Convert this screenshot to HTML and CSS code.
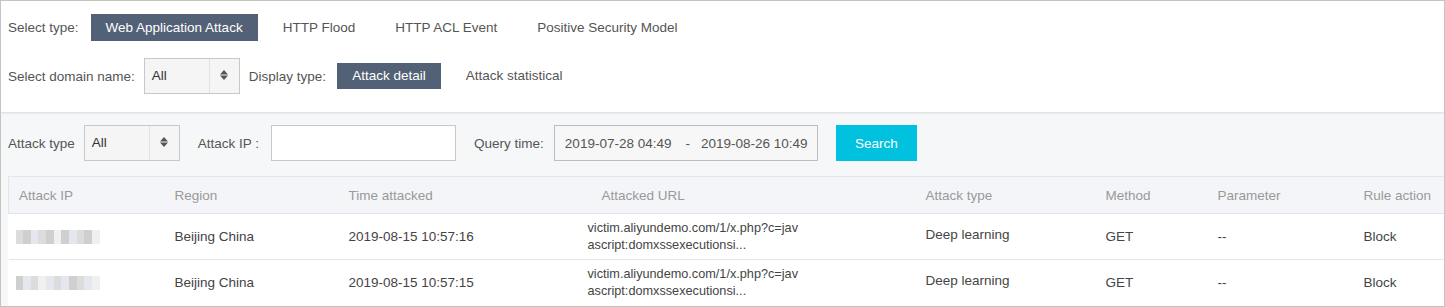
FILE: index.html
```html
<!DOCTYPE html>
<html>
<head>
<meta charset="utf-8">
<link rel="stylesheet" href="styles.css">
</head>
<body>
<div class="frame">
  <div class="top">
    <div class="row row1">
      <span class="label">Select type:</span>
      <div class="tabs">
        <span class="tab active">Web Application Attack</span>
        <span class="tab">HTTP Flood</span>
        <span class="tab">HTTP ACL Event</span>
        <span class="tab">Positive Security Model</span>
      </div>
    </div>
    <div class="row row2">
      <span class="label">Select domain name:</span>
      <div class="select sel-domain">
        <span class="sel-val">All</span>
        <span class="sel-arrow"><svg width="8" height="10" viewBox="0 0 8 10"><path d="M4 0L8 4.5H0Z M0 5.5H8L4 10Z" fill="#555"/></svg></span>
      </div>
      <span class="label lbl-display">Display type:</span>
      <div class="tabs small">
        <span class="tab active">Attack detail</span>
        <span class="tab">Attack statistical</span>
      </div>
    </div>
  </div>
  <div class="main">
    <div class="filters">
      <span class="label">Attack type</span>
      <div class="select sel-type">
        <span class="sel-val">All</span>
        <span class="sel-arrow"><svg width="8" height="10" viewBox="0 0 8 10"><path d="M4 0L8 4.5H0Z M0 5.5H8L4 10Z" fill="#555"/></svg></span>
      </div>
      <span class="label lbl-ip">Attack IP :</span>
      <div class="input"></div>
      <span class="label lbl-time">Query time:</span>
      <div class="daterange"><span>2019-07-28 04:49</span><span class="dash">-</span><span>2019-08-26 10:49</span></div>
      <button class="btn-search">Search</button>
    </div>
    <table class="grid">
      <colgroup>
        <col class="c1"><col class="c2"><col class="c3"><col class="c4"><col class="c5"><col class="c6"><col class="c7"><col class="c8">
      </colgroup>
      <thead>
        <tr>
          <th>Attack IP</th><th>Region</th><th>Time attacked</th><th class="th-url">Attacked URL</th><th>Attack type</th><th>Method</th><th>Parameter</th><th>Rule action</th>
        </tr>
      </thead>
      <tbody>
        <tr>
          <td class="td-ip"><div class="blur"><span class="b a"></span><span class="b c"></span><span class="b d"></span><span class="b a"></span><span class="b c"></span><span class="b e"></span><span class="b c"></span><span class="b d"></span><span class="b a"></span><span class="b c"></span><span class="b e"></span></div></td>
          <td>Beijing China</td>
          <td>2019-08-15 10:57:16</td>
          <td class="td-url">victim.aliyundemo.com/1/x.php?c=jav<br>ascript:domxssexecutionsi...</td>
          <td class="td-type">Deep learning</td>
          <td>GET</td>
          <td>--</td>
          <td>Block</td>
        </tr>
        <tr>
          <td class="td-ip"><div class="blur"><span class="b c"></span><span class="b d"></span><span class="b a"></span><span class="b e"></span><span class="b d"></span><span class="b a"></span><span class="b d"></span><span class="b c"></span><span class="b a"></span><span class="b d"></span><span class="b e"></span></div></td>
          <td>Beijing China</td>
          <td>2019-08-15 10:57:15</td>
          <td class="td-url">victim.aliyundemo.com/1/x.php?c=jav<br>ascript:domxssexecutionsi...</td>
          <td class="td-type">Deep learning</td>
          <td>GET</td>
          <td>--</td>
          <td>Block</td>
        </tr>
      </tbody>
    </table>
  </div>
</div>
</body>
</html>
```

FILE: styles.css
```css
* { box-sizing: border-box; }
html, body { margin: 0; padding: 0; }
body {
  font-family: "Liberation Sans", Arial, sans-serif;
  font-size: 13.5px;
  color: #444;
  background: #fff;
}
.frame {
  width: 1445px;
  height: 307px;
  border: 1px solid #c4c4c4;
  background: #f6f7f9;
  overflow: hidden;
  display: flex;
  flex-direction: column;
}
.top {
  background: #fff;
  padding: 12px 0 17px 7px;
  height: 111px;
  box-shadow: 0 1px 2px rgba(0,0,0,0.12);
  position: relative;
  z-index: 1;
}
.row { display: flex; align-items: center; }
.row1 { height: 27px; margin-top: 1px; }
.row2 { height: 36px; margin-top: 17px; }
.label { color: #555; white-space: nowrap; }
.tabs { display: flex; gap: 10px; margin-left: 12px; }
.tabs .tab {
  padding: 0 15px;
  height: 27px;
  line-height: 27px;
  color: #555;
  white-space: nowrap;
}
.tabs .tab.active { background: #536176; color: #fff; }
.tabs.small { margin-left: 11px; }
.tabs.small .tab { height: 26px; line-height: 26px; }
.select {
  display: flex;
  height: 36px;
  border: 1px solid #c8c8c8;
  background: #f5f5f5;
  align-items: stretch;
}
.sel-domain { width: 96px; margin-left: 9px; }
.sel-val { flex: 1; padding-left: 7px; line-height: 34px; color: #333; }
.sel-arrow {
  width: 30px;
  border-left: 1px solid #e2e2e2;
  display: flex;
  align-items: center;
  justify-content: center;
}
.sel-arrow svg { display: block; margin-top: -3px; }
.lbl-display { margin-left: 9px; }
.main { padding: 13px 0 0 7px; }
.filters { display: flex; align-items: center; height: 36px; }
.sel-type { width: 96px; margin-left: 9px; }
.lbl-ip { margin-left: 18px; }
.input {
  width: 185px;
  height: 36px;
  margin-left: 12px;
  border: 1px solid #c8c8c8;
  background: #fff;
}
.lbl-time { margin-left: 18px; }
.daterange {
  margin-left: 10px;
  width: 264px;
  height: 36px;
  border: 1px solid #bdbdbd;
  background: #f7f7f7;
  display: flex;
  align-items: center;
  padding-left: 10px;
  color: #555;
  white-space: nowrap;
}
.daterange .dash { margin: 0 11px 0 14px; }
.btn-search {
  margin-left: 18px;
  width: 81px;
  height: 36px;
  border: 0;
  background: #00c1de;
  color: #fff;
  font-family: inherit;
  font-size: 13.5px;
  padding: 0;
}
.grid {
  margin-top: 15px;
  border-collapse: collapse;
  table-layout: fixed;
  width: 1436px;
  background: #fff;
}
.c1 { width: 156px; } .c2 { width: 174px; } .c3 { width: 253px; } .c4 { width: 324px; }
.c5 { width: 180px; } .c6 { width: 112px; } .c7 { width: 146px; } .c8 { width: 91px; }
.grid th {
  height: 37px;
  background: #f4f5f8;
  color: #999;
  font-weight: normal;
  text-align: left;
  padding: 0 0 0 10px;
  border-top: 1px solid #e3e5ea;
  border-bottom: 1px solid #e3e5ea;
  white-space: nowrap;
}
.grid thead tr th:first-child { border-left: 1px solid #e3e5ea; }
.grid td {
  height: 46px;
  padding: 0 0 0 10px;
  border-bottom: 1px solid #e6e6e6;
  color: #444;
  white-space: nowrap;
  vertical-align: middle;
}
.grid tbody tr:last-child td { border-bottom: 0; }
.grid .td-url {
  padding-left: 0;
  position: relative;
  left: -4px;
  font-size: 12.7px;
  line-height: 17px;
  color: #444;
}
.grid .td-type { padding-bottom: 4px; }
.td-ip { padding-left: 7px !important; }
.blur { display: flex; height: 14px; width: 84px; filter: blur(0.6px); }
.blur .b { flex: 1; height: 14px; }
.b.a { background: #dcdcdc; }
.b.c { background: #cfcfcf; }
.b.d { background: #e4e8ee; }
.b.e { background: #f0f0f0; }
```
